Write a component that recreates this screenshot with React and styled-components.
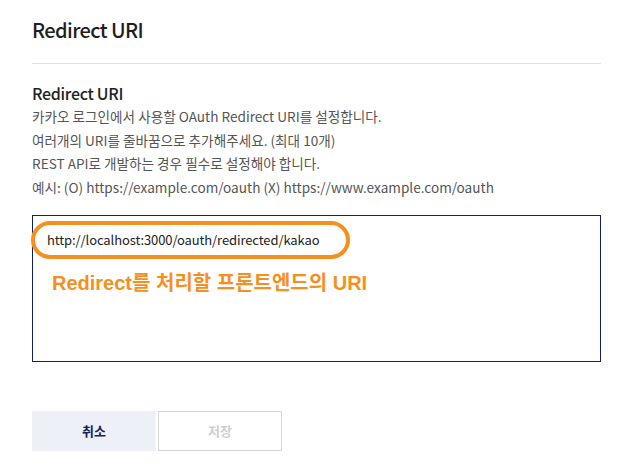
import React from 'react';
import styled, { createGlobalStyle } from 'styled-components';

const GlobalStyle = createGlobalStyle`
  body {
    margin: 0;
    background: #fff;
    font-family: "Noto Sans CJK KR", "Noto Sans", sans-serif;
  }
`;

const Page = styled.div`
  padding: 16px 30px 0 32px;
  width: 569px;
`;

const Header = styled.h1`
  margin: 0;
  padding-bottom: 19px;
  border-bottom: 1px solid #e1e1e1;
  font-size: 20px;
  line-height: 28px;
  font-weight: 500;
  color: #1e1e1e;
  letter-spacing: -0.6px;
`;

const Section = styled.section`
  margin-top: 18px;
`;

const SubTitle = styled.h2`
  margin: 0 0 1px;
  font-size: 16px;
  line-height: 22px;
  font-weight: 500;
  color: #222;
  letter-spacing: -0.3px;
`;

const Desc = styled.p`
  margin: 0;
  font-size: 13.6px;
  line-height: 23.7px;
  color: #555;
  letter-spacing: 0;
`;

const UriBox = styled.div`
  position: relative;
  margin-top: 15px;
  height: 147px;
  box-sizing: border-box;
  border: 1px solid #0d2260;
  padding: 14px 14px 0;
`;

const UriLine = styled.div`
  font-size: 13px;
  line-height: 20px;
  color: #222;
  letter-spacing: -0.1px;
`;

const Highlight = styled.span`
  position: absolute;
  left: -2px;
  top: 5px;
  width: 319px;
  height: 38px;
  box-sizing: border-box;
  border: 4px solid #f5901f;
  border-radius: 20px;
`;

const Note = styled.div`
  margin: 21px 0 0 5px;
  font-family: "Liberation Sans", "Noto Sans CJK KR", sans-serif;
  font-size: 20px;
  line-height: 24px;
  font-weight: 700;
  color: #f5901f;
  letter-spacing: 0;
`;

const Buttons = styled.div`
  display: flex;
  gap: 2px;
  margin-top: 49px;
`;

const Button = styled.button`
  width: 124px;
  height: 40px;
  box-sizing: border-box;
  font-family: "Noto Sans CJK KR", sans-serif;
  font-size: 13px;
  font-weight: 700;
  border: 1px solid ${p => (p.$primary ? '#eef0f8' : '#d6d6d6')};
  background: ${p => (p.$primary ? '#eef0f8' : '#fff')};
  color: ${p => (p.$primary ? '#14245a' : '#cfcfcf')};
  cursor: ${p => (p.disabled ? 'default' : 'pointer')};
`;

export default function App() {
    return (
        <Page>
            <GlobalStyle />
            <Header>Redirect URI</Header>
            <Section>
                <SubTitle>Redirect URI</SubTitle>
                <Desc>카카오 로그인에서 사용할 OAuth Redirect URI를 설정합니다.</Desc>
                <Desc>여러개의 URI를 줄바꿈으로 추가해주세요. (최대 10개)</Desc>
                <Desc>REST API로 개발하는 경우 필수로 설정해야 합니다.</Desc>
                <Desc>예시: (O) https://example.com/oauth (X) https://www.example.com/oauth</Desc>
                <UriBox>
                    <Highlight />
                    <UriLine>http://localhost:3000/oauth/redirected/kakao</UriLine>
                    <Note>Redirect를 처리할 프론트엔드의 URI</Note>
                </UriBox>
            </Section>
            <Buttons>
                <Button $primary>취소</Button>
                <Button disabled>저장</Button>
            </Buttons>
        </Page>
    );
}
